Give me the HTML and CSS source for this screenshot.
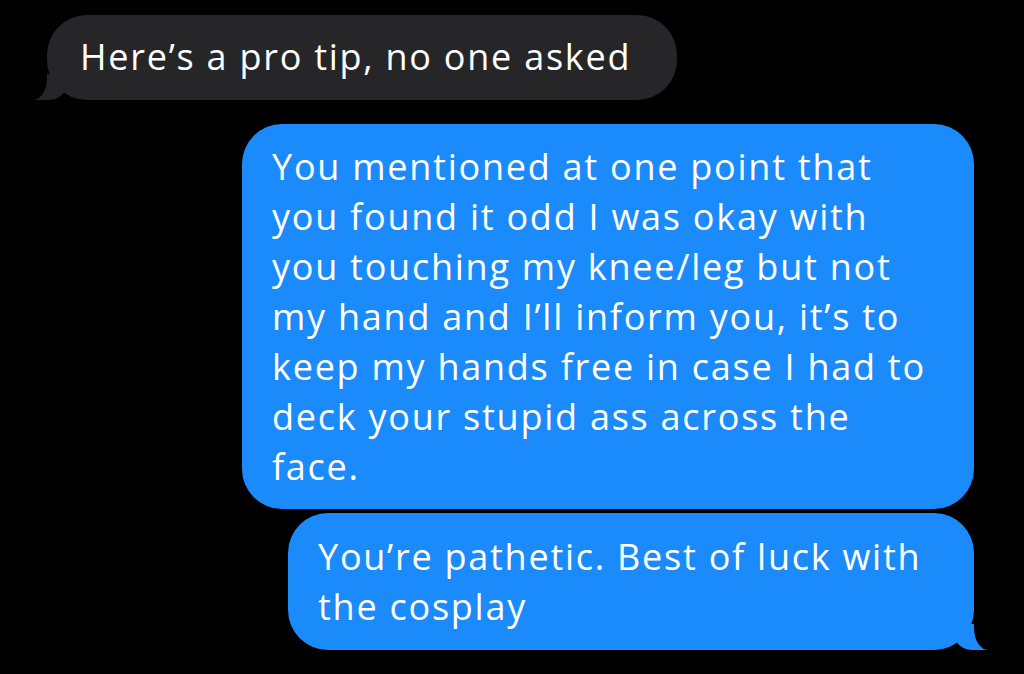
FILE: index.html
```html
<!DOCTYPE html>
<html lang="en">
<head>
  <meta charset="UTF-8">
  <title>Messages</title>
  <link rel="stylesheet" href="styles.css">
</head>
<body>
  <div class="thread">
    <div class="bubble them tail">Here’s a pro tip, no one asked</div>

    <div class="bubble me first">You mentioned at one point that<br>you found it odd I was okay with<br>you touching my knee/leg but not<br>my hand and I’ll inform you, it’s to<br>keep my hands free in case I had to<br>deck your stupid ass across the<br>face.</div>
    <div class="bubble me last tail">You’re pathetic. Best of luck with<br>the cosplay</div>
  </div>
</body>
</html>
```

FILE: styles.css
```css
body {
  margin: 0;
  padding: 0;
  background: #000;
  font-family: 'Open Sans', 'Liberation Sans', sans-serif;
  overflow: hidden;
}

.thread {
  display: flex;
  flex-direction: column;
  padding-top: 15px;
}

.bubble {
  position: relative;
  color: #fff;
  font-size: 36px;
  line-height: 50px;
  letter-spacing: 1.75px;
  border-radius: 40px;
  padding: 18px 30px;
  white-space: nowrap;
}

.them {
  align-self: flex-start;
  margin-left: 47px;
  width: 597px;
  background: #262629;
  padding: 17px 0 18px 33px;
}

.me {
  align-self: flex-end;
  margin-right: 50px;
  background: #1b8bfb;
}

.me.first {
  margin-top: 24px;
  width: 672px;
  padding-bottom: 17px;
}

.me.last {
  margin-top: 4px;
  width: 626px;
  padding-top: 19px;
}

/* tails */
.tail::before,
.tail::after {
  content: "";
  position: absolute;
  bottom: 0;
}

.them.tail::before {
  left: -13px;
  width: 32px;
  height: 26px;
  background: #262629;
  border-bottom-right-radius: 18px 14px;
}

.them.tail::after {
  left: -27px;
  width: 27px;
  height: 30px;
  background: #000;
  border-bottom-right-radius: 14px 22px;
}

.me.tail::before {
  right: -13px;
  width: 32px;
  height: 26px;
  background: #1b8bfb;
  border-bottom-left-radius: 18px 14px;
}

.me.tail::after {
  right: -27px;
  width: 27px;
  height: 30px;
  background: #000;
  border-bottom-left-radius: 14px 22px;
}
```
